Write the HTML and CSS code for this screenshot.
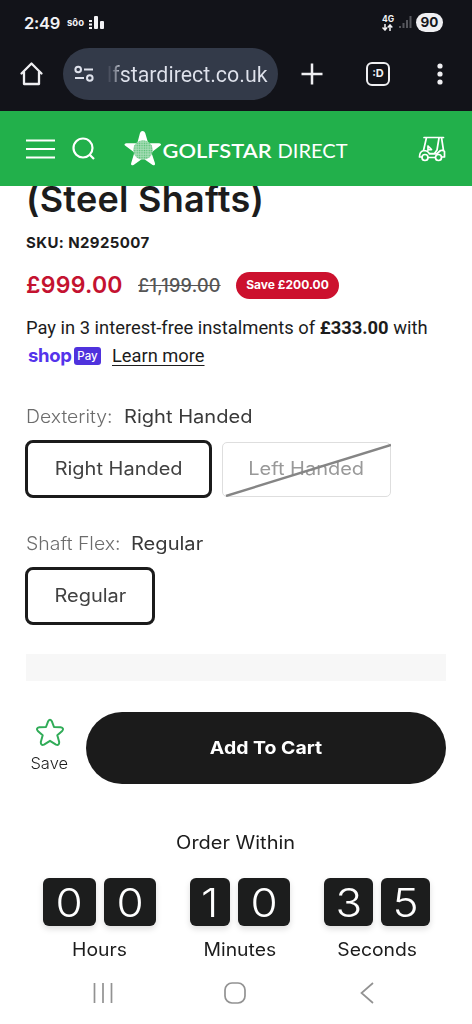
FILE: index.html
```html
<!DOCTYPE html>
<html lang="en">
<head>
<meta charset="utf-8">
<meta name="viewport" content="width=device-width">
<title>Golfstar Direct</title>
<link rel="stylesheet" href="styles.css">
</head>
<body>
<div class="chrome">
  <div class="status">
    <span class="clock">2:49</span>
    <span class="soo">sôo</span>
    <svg class="bars" width="16" height="16" viewBox="0 0 16 16" fill="#f2f2f5"><path d="M0 5h3v2H0zM0 8.500h3v2H0zM0 12h3v2H0z"/><rect x="5" y="1" width="4" height="13" rx="1"/><rect x="11" y="6" width="4" height="8" rx="1"/></svg>
    <span class="net"><b>4G</b><svg width="11" height="7" viewBox="0 0 11 7" fill="none" stroke="#f2f2f5" stroke-width="1.500"><path d="M3 0v6M.5 3.500L3 6l2-2.500M8 7V1M5.700 3.500L8 1l2.300 2.500"/></svg></span>
    <svg class="signal" width="13" height="13" viewBox="0 0 13 13" fill="#55565c"><path d="M0 10h2v2H0zM3.500 7h2v5h-2zM7 4h2v8H7zM10.500 0h2v12h-2z"/></svg>
    <span class="battery">90</span>
  </div>
  <div class="toolbar">
    <svg class="home" width="26" height="26" viewBox="0 0 26 26" fill="none" stroke="#efeff2" stroke-width="2.300" stroke-linejoin="round" stroke-linecap="round"><path d="M2.500 12.500L12.500 2.500l10 10M5 11v12h15V11"/></svg>
    <div class="omnibox">
      <svg width="20" height="18" viewBox="0 0 20 18" fill="none" stroke="#dfe2ec" stroke-width="2"><circle cx="4.200" cy="4.500" r="2.800"/><path d="M10 4.500h9M1 13h9"/><circle cx="15.800" cy="13" r="2.800"/></svg>
      <span class="url">lfstardirect.co.uk</span>
    </div>
    <svg class="plus" width="22" height="22" viewBox="0 0 22 22" stroke="#efeff2" stroke-width="2.500"><path d="M11 .5v21M.5 11h21"/></svg>
    <span class="tabs">:D</span>
    <svg class="dots" width="6" height="22" viewBox="0 0 6 22" fill="#efeff2"><circle cx="3" cy="3" r="2.600"/><circle cx="3" cy="11" r="2.600"/><circle cx="3" cy="19" r="2.600"/></svg>
  </div>
</div>

<header class="site">
  <svg class="menu" width="29" height="20" viewBox="0 0 29 20" stroke="#fff" stroke-width="2.200"><path d="M0 1.500h29M0 10h29M0 18.500h29"/></svg>
  <svg class="search" width="24" height="24" viewBox="0 0 24 24" fill="none" stroke="#fff" stroke-width="2.200"><circle cx="11" cy="11" r="9.500"/><path d="M17.500 17.500l4.500 4.500"/></svg>
  <svg class="logo" width="226" height="38" viewBox="0 0 226 38">
    <defs><pattern id="dimples" width="2.400" height="2.400" patternUnits="userSpaceOnUse"><circle cx="1.200" cy="1.200" r=".7" fill="#4dbd6d"/></pattern></defs>
    <path d="M18.500 1Q20.500 1 21.200 3L24.200 13.200H35.200Q38.200 13.800 36.400 15.600L27.400 22.400L30.900 33.100Q31.500 36.200 28.600 34.900L19 28.300L9.600 34.900Q6.500 36.200 7.200 33.100L10.400 22.400L1 15.600Q-.5 13.700 2.300 13.200L13.300 13.200L16 3Q16.700 1 18.500 1Z" fill="#fff"/>
    <circle cx="19" cy="20" r="9.800" fill="#a5dcb5"/><circle cx="19" cy="20" r="9.800" fill="url(#dimples)"/>
    <text class="logo-strong" x="38.500" y="27.500" textLength="109" lengthAdjust="spacingAndGlyphs">GOLFSTAR</text>
    <text class="logo-light" x="153.500" y="27.500" textLength="70" lengthAdjust="spacingAndGlyphs">DIRECT</text>
  </svg>
  <svg class="cart" width="28" height="26" viewBox="0 0 28 26" fill="none" stroke="#fff" stroke-width="1.700" stroke-linejoin="round" stroke-linecap="round"><path d="M6 1.500h19.500M8.500 1.500L5.500 14.500M23.500 1.500l2 13M21 2l-2 12l-2.500 3.500h-4.500M10 10v4l3.500-.5M13.500 13.500L10 10M5.500 14.500Q1.500 15.500 1.500 21H3.500M10.500 21.500h6.500M24 21h2.500V15.500Q26 14 22.500 14.500L18.500 18h-7Q10 14.500 5.500 14.500"/><circle cx="7" cy="21.500" r="3"/><circle cx="20.500" cy="21.500" r="3"/></svg>
</header>

<main>
  <h1>(Steel Shafts)</h1>
  <p class="sku">SKU: N2925007</p>
  <div class="prices">
    <span class="price">£999.00</span>
    <s class="was">£1,199.00</s>
    <span class="saving">Save £200.00</span>
  </div>
  <p class="pay">Pay in 3 interest-free instalments of <b>£333.00</b> with</p>
  <div class="shop"><span class="shop-word">shop</span><span class="shop-pay">Pay</span><a class="learn">Learn more</a></div>

  <div class="label dexterity"><span class="name">Dexterity:</span><span class="value">Right Handed</span></div>
  <div class="options">
    <button class="option selected right"><span class="wide">Right Handed</span></button>
    <button class="option sold-out"><span class="wide">Left Handed</span><svg class="strike" viewBox="0 0 168 54" width="168" height="54"><path d="M3 53L168 2" stroke="#858585" stroke-width="2.400"/></svg></button>
  </div>
  <div class="label flex"><span class="name">Shaft Flex:</span><span class="value">Regular</span></div>
  <div class="options">
    <button class="option selected regular"><span class="wide">Regular</span></button>
  </div>
  <div class="placeholder"></div>
  <div class="buy">
    <div class="save">
      <svg width="30" height="30" viewBox="0 0 30 30" fill="none" stroke="#31ac58" stroke-width="2" stroke-linejoin="round"><path d="M13.200 3.200Q15 .2 16.800 3.200L19 9L25.600 9.300Q29.500 10 27.200 13L22.300 17.200L24.200 24Q24.300 27.800 21 26.600L15 22.800L9 26.600Q5.700 27.800 5.800 24L7.700 17.200L2.800 13Q.5 10 4.400 9.300L11 9Z"/></svg>
      <span>Save</span>
    </div>
    <button class="add"><span>Add To Cart</span></button>
  </div>
  <div class="order"><span class="wide">Order Within</span></div>
  <div class="timer">
    <div class="unit hours"><div class="digits"><span><i>0</i></span><span><i>0</i></span></div><div class="caption"><span>Hours</span></div></div>
    <div class="unit minutes"><div class="digits"><span class="one"><i>1</i></span><span><i>0</i></span></div><div class="caption"><span>Minutes</span></div></div>
    <div class="unit seconds"><div class="digits"><span><i>3</i></span><span><i>5</i></span></div><div class="caption"><span>Seconds</span></div></div>
  </div>
</main>
<nav class="system">
  <svg width="20" height="20" viewBox="0 0 20 20" stroke="#929292" stroke-width="1.700"><path d="M1.500 0v20M10 0v20M18.500 0v20"/></svg>
  <svg width="22" height="22" viewBox="0 0 22 22" fill="none" stroke="#929292" stroke-width="1.700"><rect x="1" y="1" width="20" height="20" rx="7"/></svg>
  <svg width="14" height="22" viewBox="0 0 14 22" fill="none" stroke="#929292" stroke-width="1.700"><path d="M13 1L1.500 11L13 21"/></svg>
</nav>
</body>
</html>
```

FILE: styles.css
```css
* { box-sizing: border-box; }
body { margin: 0; width: 472px; height: 1024px; overflow: hidden; background: #fff; color: #1c1c1c; font-family: Inter, "Liberation Sans", sans-serif; display: flex; flex-direction: column; }
h1, p { margin: 0; }
button { font: inherit; color: inherit; margin: 0; padding: 0; background: none; border: 0; }
svg { display: block; flex: none; }
span, s, a { white-space: nowrap; }
.wide { display: inline-block; transform: scaleX(1.11); }

.chrome { height: 111px; background: #121319; color: #f2f2f5; flex: none; }
.status { height: 45px; display: flex; align-items: center; padding: 0 29px 0 24px; }
.clock { width: 43px; font-size: 16.5px; font-weight: 600; letter-spacing: -.3px; }
.soo { width: 22px; font-size: 9.5px; font-weight: 700; }
.net { margin-left: auto; width: 12px; font-size: 8.5px; line-height: 9px; }
.signal { margin: 0 4px 0 5px; }
.battery { width: 27px; height: 19px; border-radius: 10px; background: #efeff2; color: #15161b; font-size: 13.5px; font-weight: 700; line-height: 19px; text-align: center; }
.toolbar { height: 56px; margin-top: 1px; display: flex; align-items: center; }
.home { margin-left: 19px; }
.omnibox { width: 215px; height: 52px; margin-left: 18px; padding-left: 11px; border-radius: 26px; background: #333a49; display: flex; align-items: center; }
.url { margin-left: 13px; font: 21.4px Roboto, sans-serif; background: linear-gradient(90deg, #4b5160 0 4px, #dfe2ec 15px); background-clip: text; color: transparent; }
.plus { margin-left: 23px; }
.tabs { width: 24px; height: 24px; margin-left: 43px; border: 2.4px solid #efeff2; border-radius: 6px; font-size: 11px; font-weight: 700; line-height: 18px; text-align: center; }
.dots { margin-left: 47px; }

.site { position: relative; z-index: 1; height: 75px; flex: none; background: #22b04b; display: flex; align-items: center; padding-left: 26px; }
.search { margin-left: 17px; }
.logo { margin-left: 28px; }
.logo text { fill: #fff; font-family: Lato, sans-serif; font-size: 20px; }
.logo .logo-strong { font-weight: 600; }
.cart { margin-left: 68px; }

main { padding-left: 26px; height: 776px; flex: none; }
h1 { height: 40px; margin-top: -7px; font-size: 36px; font-weight: 600; line-height: 40px; letter-spacing: .25px; }
.sku { margin-top: 14px; font-size: 15px; font-weight: 700; line-height: 20px; letter-spacing: .4px; }
.prices { display: flex; align-items: center; height: 28px; margin-top: 18px; }
.price { width: 112px; color: #c41230; font-size: 23px; font-weight: 600; letter-spacing: .25px; }
.was { width: 98px; color: #555; font-size: 18px; font-weight: 500; letter-spacing: .25px; }
.saving { width: 103px; height: 27px; border-radius: 14px; background: #cc112e; color: #fff; font-size: 12px; font-weight: 700; line-height: 26px; text-align: center; }
.pay { margin-top: 17px; font: 18.36px/24px Roboto, sans-serif; white-space: nowrap; }
.shop { display: flex; align-items: center; height: 26px; margin-top: 2px; padding-left: 2px; }
.shop-word { width: 46px; color: #5433eb; font-size: 18.5px; font-weight: 700; line-height: 20px; letter-spacing: -.3px; }
.shop-pay { width: 27px; height: 18px; margin-top: 2px; border-radius: 3px; background: #4f32dd; color: #fff; font-size: 11.5px; line-height: 18px; text-align: center; font-weight: 500; }
.learn { margin-left: 11px; font: 18.3px Roboto, sans-serif; text-decoration: underline; text-underline-offset: 3px; text-decoration-thickness: 1px; }
.label { display: flex; height: 24px; font-size: 18px; line-height: 24px; font-weight: 400; color: #3a3a3a; }
.label span { transform: scaleX(1.115); transform-origin: left; }
.label .name { flex: none; color: #6c6c6c; font-weight: 300; transform: scaleX(1.08); }
.dexterity { margin-top: 37px; }
.dexterity .name { width: 98px; }
.flex { margin-top: 34px; }
.flex .name { width: 105px; }
.options { display: flex; gap: 10px; align-items: center; height: 58px; margin: 11px 0 0 -1px; }
.option { height: 58px; border: 3px solid #1b1b1b; border-radius: 8px; font-size: 18px; color: #414141; white-space: nowrap; padding-bottom: 2px; }
.right { width: 187px; }
.regular { width: 130px; }
.sold-out { position: relative; width: 169px; height: 55px; border: 1px solid #dedede; border-radius: 5px; color: #999; }
.strike { position: absolute; left: 0; top: 0; }
.placeholder { width: 420px; height: 27px; margin-top: 29px; background: #f7f7f7; }
.buy { display: flex; height: 72px; margin-top: 31px; }
.save { width: 47px; padding-top: 6px; display: flex; flex-direction: column; align-items: center; font-size: 16px; line-height: 20px; gap: 5px; font-weight: 300; }
.save span { transform: scaleX(1.03); }
.add { width: 360px; height: 72px; margin-left: 13px; border-radius: 36px; background: #1b1b1b; color: #fff; font-size: 18px; font-weight: 700; padding-bottom: 2px; }
.add span { display: inline-block; transform: scaleX(1.08); }
.order { width: 420px; margin-top: 47px; font-size: 18px; line-height: 24px; text-align: center; }
.timer { display: flex; margin: 23px 0 0 17px; }
.unit { width: 113px; }
.minutes { width: 100px; margin-left: 34px; }
.seconds { width: 106px; margin-left: 34px; }
.digits { display: flex; gap: 8px; }
.digits span { flex: 1; height: 48px; border-radius: 6px; background: #1c1d1d; color: #fff; font-size: 39px; font-weight: 300; line-height: 50px; text-align: center; box-shadow: 0 3px 6px #0002; }
.digits i { display: inline-block; font-style: normal; transform: scaleX(1.13); }
.digits .one { flex: 0 0 40px; }
.caption { margin-top: 12px; font-size: 18px; line-height: 24px; text-align: center; }
.caption span { display: inline-block; transform: scaleX(1.075); }
.system { display: flex; height: 62px; align-items: center; padding-left: 93px; }
.system svg + svg { margin-left: 111px; }
.system svg:last-child { margin-left: 114px; }
```
